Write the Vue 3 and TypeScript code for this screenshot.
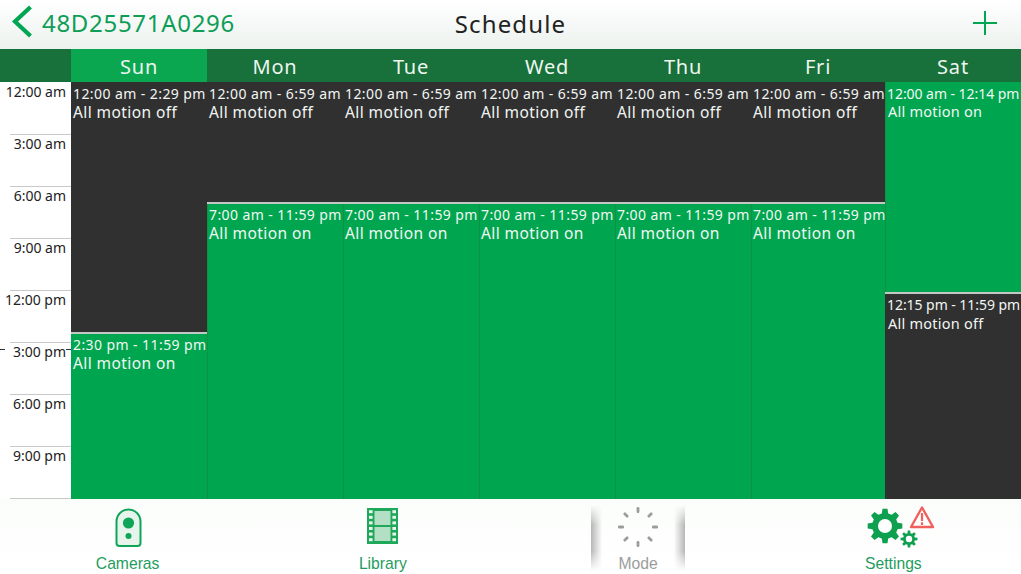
<script setup lang="ts">
interface Block { range: string; label: string; height: number; on: boolean }
interface Day { name: string; width: number; current?: boolean; fitted?: boolean; blocks: Block[] }

const off = 'All motion off'
const on = 'All motion on'
const weekday = (name: string, width: number): Day => ({
  name,
  width,
  blocks: [
    { range: '12:00 am - 6:59 am', label: off, height: 120, on: false },
    { range: '7:00 am - 11:59 pm', label: on, height: 297, on: true },
  ],
})
const days: Day[] = [
  {
    name: 'Sun', width: 136, current: true,
    blocks: [
      { range: '12:00 am - 2:29 pm', label: off, height: 250, on: false },
      { range: '2:30 pm - 11:59 pm', label: on, height: 167, on: true },
    ],
  },
  weekday('Mon', 136),
  weekday('Tue', 136),
  weekday('Wed', 136),
  weekday('Thu', 136),
  weekday('Fri', 134),
  {
    name: 'Sat', width: 136, fitted: true,
    blocks: [
      { range: '12:00 am - 12:14 pm', label: on, height: 210, on: true },
      { range: '12:15 pm - 11:59 pm', label: off, height: 207, on: false },
    ],
  },
]
const times = ['12:00 am', '3:00 am', '6:00 am', '9:00 am', '12:00 pm', '3:00 pm', '6:00 pm', '9:00 pm']

function gear(cx: number, cy: number, ro: number, ri: number, teeth: number): string {
  const pts: string[] = []
  const step = (Math.PI * 2) / teeth
  for (let i = 0; i < teeth; i++) {
    const a = i * step - Math.PI / 2
    const corners: [number, number][] = [
      [ri, a - step * 0.32],
      [ro, a - step * 0.18],
      [ro, a + step * 0.18],
      [ri, a + step * 0.32],
    ]
    for (const [r, t] of corners) {
      pts.push(`${(cx + r * Math.cos(t)).toFixed(2)} ${(cy + r * Math.sin(t)).toFixed(2)}`)
    }
  }
  return 'M' + pts.join('L') + 'Z'
}
const bigGear = gear(19, 25, 17.5, 13, 8)
const smallGear = gear(43, 38, 8.5, 6, 8)
const spokes = Array.from({ length: 8 }, (_, i) => i * 45)
</script>

<template>
  <div class="screen">
    <header class="topbar">
      <div class="back">
        <svg class="chevron" width="22" height="33" viewBox="0 0 22 33">
          <path d="M19.5 2 L4 16.5 L19.5 31" fill="none" stroke="#00a651" stroke-width="4.2" />
        </svg>
        <span class="device">48D25571A0296</span>
      </div>
      <h1 class="title">Schedule</h1>
      <svg class="plus" width="26" height="26" viewBox="0 0 26 26">
        <path d="M13 1V25M1 13H25" stroke="#00a651" stroke-width="2" />
      </svg>
    </header>

    <div class="dayhead">
      <div class="corner"></div>
      <div
        v-for="d in days"
        :key="d.name"
        class="dayname"
        :class="{ current: d.current }"
        :style="{ width: d.width + 'px' }"
      >{{ d.name }}</div>
    </div>

    <main class="grid">
      <div class="hours">
        <div v-for="t in times" :key="t" class="hour">{{ t }}</div>
        <i class="tick tick-l"></i>
        <i class="tick tick-r"></i>
      </div>
      <div
        v-for="d in days"
        :key="d.name + '-col'"
        class="col"
        :class="{ fitted: d.fitted }"
        :style="{ width: d.width + 'px' }"
      >
        <div
          v-for="b in d.blocks"
          :key="b.range"
          class="block"
          :class="{ on: b.on, off: !b.on }"
          :style="{ height: b.height + 'px' }"
        >
          <div class="range">{{ b.range }}</div>
          <div class="label">{{ b.label }}</div>
        </div>
      </div>
    </main>

    <nav class="tabs">
      <div class="tab">
        <svg class="cam" width="27" height="40" viewBox="0 0 27 40">
          <path d="M1.5 13.5a12 12 0 0 1 24 0V35a3 3 0 0 1-3 3h-18a3 3 0 0 1-3-3Z" fill="#e6f4ec" stroke="#0fa558" stroke-width="2" />
          <circle cx="13.5" cy="15" r="5.6" fill="#0fa558" />
          <circle cx="13.5" cy="28" r="3" fill="#0fa558" />
        </svg>
        <span>Cameras</span>
      </div>
      <div class="tab">
        <svg width="31" height="36" viewBox="0 0 31 36">
          <rect width="31" height="36" fill="#1fa85a" />
          <rect x="7.5" y="3" width="16" height="14" fill="#b3dfc4" />
          <rect x="7.5" y="19" width="16" height="14" fill="#b3dfc4" />
          <g fill="#e9f6ee">
            <rect v-for="n in 6" :key="'l' + n" x="2" :y="n * 5.6 - 3.4" width="3.6" height="3" />
            <rect v-for="n in 6" :key="'r' + n" x="25.4" :y="n * 5.6 - 3.4" width="3.6" height="3" />
          </g>
        </svg>
        <span>Library</span>
      </div>
      <div class="tab mode">
        <svg width="44" height="44" viewBox="-22 -22 44 44">
          <rect
            v-for="a in spokes"
            :key="a"
            x="-1.4"
            y="-20"
            width="2.8"
            height="6"
            rx="1.2"
            fill="#9c9c9c"
            :transform="`rotate(${a})`"
          />
        </svg>
        <span>Mode</span>
      </div>
      <div class="tab">
        <svg class="gears" width="72" height="48" viewBox="0 0 72 48">
          <path :d="bigGear" fill="#0fa04f" />
          <circle cx="19" cy="25" r="7" fill="#fff" />
          <path :d="smallGear" fill="#0fa04f" />
          <circle cx="43" cy="38" r="3.2" fill="#fff" />
          <path d="M56 6.5 L45 26 H67 Z" fill="#fff" stroke="#f0605c" stroke-width="2.4" stroke-linejoin="round" />
          <path d="M56 12V20M56 21.3V24" stroke="#f0605c" stroke-width="2.2" />
        </svg>
        <span>Settings</span>
      </div>
    </nav>
  </div>
</template>

<style>
html, body { margin: 0; background: #fff; }
</style>

<style scoped>
.screen {
  width: 1021px;
  height: 574px;
  overflow: hidden;
  display: flex;
  flex-direction: column;
  font-family: "Noto Sans", "Open Sans", sans-serif;
  background: #fff;
}
.topbar {
  height: 49px;
  flex: none;
  box-sizing: border-box;
  padding: 0 23px 6px 11px;
  display: flex;
  align-items: center;
  justify-content: space-between;
  position: relative;
  background: linear-gradient(#ffffff, #ecf2ee);
}
.back { display: flex; align-items: center; gap: 9px; }
.chevron { flex: none; }
.device {
  color: #0f9d58;
  font-size: 24px;
  letter-spacing: 0.7px;
  margin-top: 2px;
}
.plus { margin-top: 2px; }
.title {
  position: absolute;
  left: 0;
  right: 0;
  top: 6px;
  margin: 0;
  text-align: center;
  font-size: 24px;
  line-height: 36px;
  font-weight: 400;
  letter-spacing: 1.15px;
  color: #222;
  pointer-events: none;
}
.dayhead {
  height: 33px;
  flex: none;
  display: flex;
  background: #18703a;
}
.corner { width: 71px; flex: none; }
.dayname {
  box-sizing: border-box;
  flex: none;
  text-align: center;
  color: #eef6f0;
  font-size: 20px;
  line-height: 35px;
  letter-spacing: 0.8px;
}
.dayname.current { background: #0aa650; }
.grid {
  height: 417px;
  flex: none;
  display: flex;
}
.hours {
  width: 71px;
  flex: none;
  position: relative;
  background: #fff;
  box-sizing: border-box;
}
.hour {
  height: 52px;
  box-sizing: border-box;
  margin-left: 10px;
  border-bottom: 1px solid #c8c8c8;
  padding: 0 5px 0 0;
  color: #222;
  font-size: 14px;
  line-height: 18px;
  white-space: nowrap;
  display: flex;
  justify-content: flex-end;
  align-items: flex-start;
}
.hour:first-child { height: 53px; padding-top: 1px; }
.tick {
  position: absolute;
  top: 267px;
  height: 1px;
  background: #333;
}
.tick-l { left: 0; width: 5px; }
.tick-r { left: 66px; width: 5px; }
.col {
  flex: none;
  display: flex;
  flex-direction: column;
  box-sizing: border-box;
}
.block {
  box-sizing: border-box;
  overflow: hidden;
  white-space: nowrap;
  padding-left: 2px;
  color: #f2f6f3;
}
.block + .block { border-top: 2px solid #c4c8c4; }
.block.on { background: #00a64f; }
.block.off { background: #303030; }
.col + .col .block.on { box-shadow: inset 1px 0 #13913f; }
.range {
  font-size: 14px;
  line-height: 20px;
  margin-top: 2px;
  letter-spacing: 0.42px;
}
.block + .block .range { margin-top: 1px; }
.label {
  font-size: 15.5px;
  line-height: 16px;
  letter-spacing: 0.42px;
}
.fitted .range { letter-spacing: -0.05px; }
.fitted .label { font-size: 14.5px; letter-spacing: 0.25px; line-height: 16px; padding-left: 1px; }
.fitted .block:first-child .range { line-height: 18px; margin-top: 3px; }
.tabs {
  flex: 1;
  display: flex;
  background: linear-gradient(#fbfdfb, #fff);
}
.tab {
  width: 255.25px;
  flex: none;
  position: relative;
  box-sizing: border-box;
  height: 75px;
  padding-top: 9px;
  display: flex;
  flex-direction: column;
  align-items: center;
  font-family: "Liberation Sans", Arial, sans-serif;
  font-size: 15.7px;
  color: #1f9c60;
}
.tab svg { height: auto; flex: none; }
.cam { margin-left: 1px; }
.tab span {
  position: absolute;
  top: 56px;
  left: 0;
  right: 0;
  text-align: center;
}
.mode { color: #9c9c9c; padding-top: 6px; }
.mode::before {
  content: "";
  position: absolute;
  left: 80px;
  width: 94px;
  top: 6px;
  bottom: 3px;
  background: linear-gradient(90deg, rgba(0,0,0,.28), rgba(0,0,0,0) 12%, rgba(0,0,0,0) 88%, rgba(0,0,0,.28));
  -webkit-mask-image: linear-gradient(transparent, #000 30%, #000 70%, transparent);
  mask-image: linear-gradient(transparent, #000 30%, #000 70%, transparent);
}
.gears { margin-top: -7px; margin-left: 18px; overflow: visible; }
</style>
